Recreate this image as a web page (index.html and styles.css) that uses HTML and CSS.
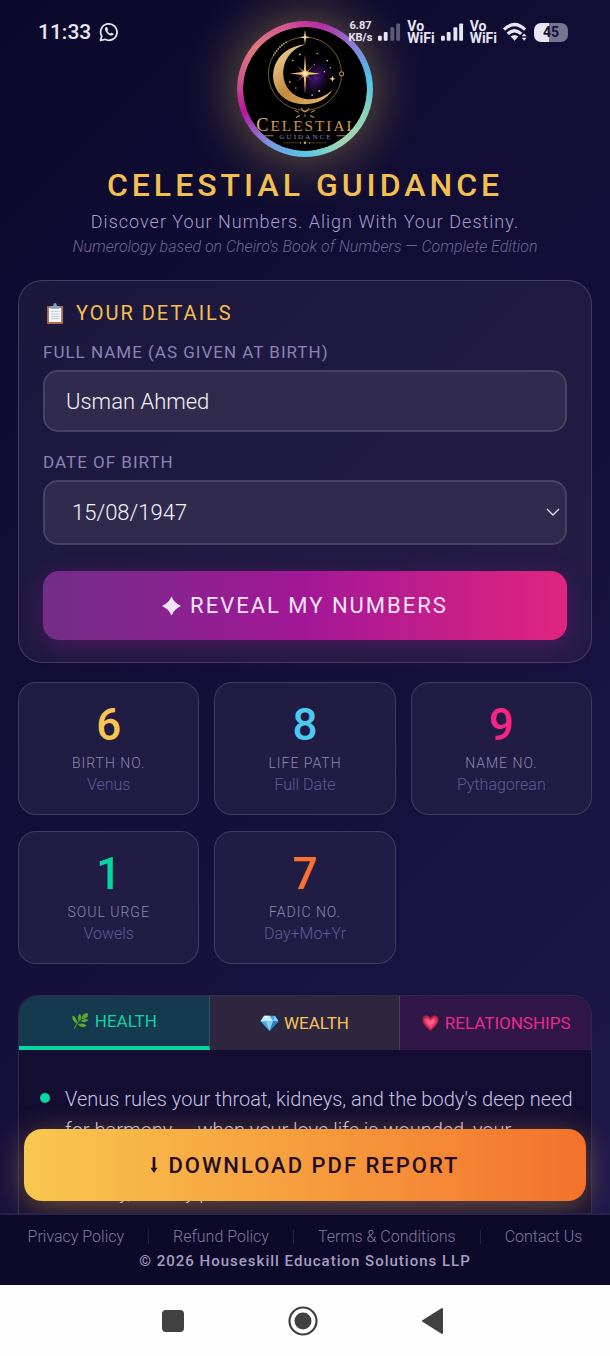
FILE: index.html
```html
<!DOCTYPE html>
<html lang="en">
<head>
<meta charset="utf-8">
<meta name="viewport" content="width=device-width, initial-scale=1">
<title>Celestial Guidance</title>
<link rel="stylesheet" href="styles.css">
</head>
<body>
<div class="status-bar">
  <div class="status-group">
    <span class="clock">11:33</span>
    <svg class="whatsapp" viewBox="0 0 20 20" fill="none" stroke="currentColor" stroke-width="1.8"><path d="M1.500 18.500l1.200-4.400A8.200 8.200 0 1 1 6 17.300z" stroke-linejoin="round"/><path d="M6.800 5.300c-1.600 1.400-.7 4 1.500 6.100 2.200 2.100 4.700 3 6 1.400.4-.6.3-1-.1-1.300l-1.500-.8c-.5-.2-.8 0-1.300.8-1.300-.4-2.400-1.500-3-2.800.7-.6.9-.8.7-1.300l-.7-1.600c-.3-.7-.9-.9-1.600-.5z" fill="currentColor" stroke="none"/></svg>
  </div>
  <div class="status-group status-right">
    <span class="speed">6.87<br>KB/s</span>
    <svg class="signal" viewBox="0 0 24 20" fill="currentColor"><rect x="0" y="14" width="4" height="5" rx="1"/><rect x="6" y="10" width="4" height="9" rx="1"/><rect x="13" y="5" width="4" height="14" rx="1" opacity=".35"/><rect x="19" y="1" width="4" height="18" rx="1" opacity=".35"/></svg>
    <span class="vowifi">Vo<br>WiFi</span>
    <svg class="signal" viewBox="0 0 24 20" fill="currentColor"><rect x="0" y="14" width="4" height="5" rx="1"/><rect x="6" y="10" width="4" height="9" rx="1"/><rect x="13" y="5" width="4" height="14" rx="1"/><rect x="19" y="1" width="4" height="18" rx="1"/></svg>
    <span class="vowifi">Vo<br>WiFi</span>
    <svg class="wifi" viewBox="0 0 26 20" fill="none" stroke="currentColor" stroke-width="3.400"><path d="M1 7.500Q12 -3 23 7.500M5 12q7-6.500 14 0"/><path d="M8 14.800q4-3.500 8 0L12 19z" fill="currentColor" stroke="none"/><path d="M19.500 14.500l2.500-3 2.500 3zM19.500 16l2.500 3 2.500-3z" fill="currentColor" stroke="none"/></svg>
    <span class="battery">45</span>
  </div>
</div>

<main class="app">
  <header class="hero">
    <div class="logo-ring">
      <svg class="logo" viewBox="0 0 122 122" role="img" aria-label="Celestial Guidance logo">
        <defs>
          <linearGradient id="gold" x1="0" y1="0" x2="1" y2="1"><stop offset="0" stop-color="#f6dca0"/><stop offset=".5" stop-color="#c18a3f"/><stop offset="1" stop-color="#e8bb70"/></linearGradient>
          <radialGradient id="nebula"><stop offset="0" stop-color="#4c1b85"/><stop offset="1" stop-color="#080310" stop-opacity="0"/></radialGradient>
          <radialGradient id="flare"><stop offset="0" stop-color="#fff"/><stop offset=".4" stop-color="#ffd98a"/><stop offset="1" stop-color="#c87a30" stop-opacity="0"/></radialGradient>
        </defs>
        <circle cx="61" cy="61" r="61" fill="#000"/>
        <circle cx="61" cy="46" r="36" fill="none" stroke="#a98245" stroke-width=".7"/>
        <path d="M30 28A36 36 0 0 1 44 14" fill="none" stroke="#efc982" stroke-width="1.600" stroke-dasharray="1 1.500"/>
        <ellipse cx="72" cy="50" rx="18" ry="25" fill="url(#nebula)" transform="rotate(30 72 50)"/>
        <path d="M62 17C18 21 20 77 62 76Q80 75 88 62Q77 72 63 71C32 67 32 25 62 17z" fill="url(#gold)"/>
        <path d="M61 27l1.200 17L76 46l-13.800 1.200L61 66l-1.200-18.800L46 46l13.800-2z" fill="#f4c77c"/>
        <path d="M53 38l8.500 7 8-7-7.500 8 7.500 8-8-7.500-8.500 7.500 7.500-8z" fill="#c98e4c"/>
        <circle cx="61" cy="46" r="5" fill="url(#flare)"/>
        <path d="M61 3l1 6 4 1-4 1-1 6-1-6-4-1 4-1zM88 48l.8 2.200L91 51l-2.200.8L88 54l-.8-2.200L85 51l2.200-.8z" fill="#f0ce88"/>
        <circle cx="97" cy="46" r="2" fill="#000" stroke="#b88d49"/>
        <g fill="#e4c386"><circle cx="49" cy="33" r=".8"/><circle cx="56" cy="27" r=".9"/><circle cx="73" cy="26" r=".7"/><circle cx="83" cy="33" r=".9"/><circle cx="86" cy="40" r=".7"/><circle cx="46" cy="54" r=".8"/><circle cx="52" cy="60" r=".7"/><circle cx="75" cy="63" r="1"/><circle cx="70" cy="37" r=".6"/><circle cx="80" cy="44" r=".7"/><circle cx="68" cy="67" r=".8"/></g>
        <path d="M57 80q4 7 8 0M55 84l-4-2M56 87l-4 2M67 84l4-2M66 87l4 2M61 86v2" fill="none" stroke="#c79a55"/>
        <text x="63" y="102" text-anchor="middle" class="logo-name" fill="url(#gold)"><tspan class="logo-cap">C</tspan>ELESTIAL</text>
        <text x="62" y="110" text-anchor="middle" class="logo-sub">GUIDANCE</text>
        <path d="M19 107h11M92 107h12" stroke="#c79a55" stroke-width=".8"/><path d="M40 114h15M67 114h15" stroke="#8b693c" stroke-width=".5"/><circle cx="61" cy="114" r="1.300" fill="#c79a55"/><circle cx="56.500" cy="114" r=".8" fill="#c79a55"/><circle cx="65.500" cy="114" r=".8" fill="#c79a55"/>
      </svg>
    </div>
    <h1 class="title">CELESTIAL GUIDANCE</h1>
    <p class="tagline">Discover Your Numbers. Align With Your Destiny.</p>
    <p class="source">Numerology based on Cheiro's Book of Numbers — Complete Edition</p>
  </header>

  <form class="details">
    <h2 class="details-title">
      <svg class="clipboard" viewBox="0 0 20 22"><rect x="1" y="3" width="17" height="19" rx="1" fill="#a7674a"/><path d="M3 5h13v15H3z" fill="#f5f7fa"/><path d="M5 9h9M5 11.500h9M5 14h9M5 16.500h9" stroke="#b4bec8" stroke-width=".8"/><path d="M5 6V3h2.500q.2-3 2-3t2 3H14v3z" fill="#7ca5bb"/></svg>
      YOUR DETAILS
    </h2>
    <label class="field-label" for="name">FULL NAME (AS GIVEN AT BIRTH)</label>
    <input class="field" id="name" type="text" value="Usman Ahmed">
    <label class="field-label" for="dob">DATE OF BIRTH</label>
    <div class="date-wrap">
      <select class="field date" id="dob"><option>15/08/1947</option></select>
      <svg class="chevron" viewBox="0 0 14 8" fill="none" stroke="currentColor" stroke-width="1.300"><path d="M1 1l6 6 6-6"/></svg>
    </div>
    <button class="reveal" type="button">
      <svg class="spark" viewBox="0 0 20 20"><path d="M10 0Q13 7 20 10 13 13 10 20 7 13 0 10 7 7 10 0z" fill="currentColor"/></svg>
      REVEAL MY NUMBERS
    </button>
  </form>

  <section class="stats">
    <article class="stat"><strong class="num gold">6</strong><span class="stat-label">BIRTH NO.</span><span class="stat-note">Venus</span></article>
    <article class="stat"><strong class="num blue">8</strong><span class="stat-label">LIFE PATH</span><span class="stat-note">Full Date</span></article>
    <article class="stat"><strong class="num pink">9</strong><span class="stat-label">NAME NO.</span><span class="stat-note">Pythagorean</span></article>
    <article class="stat"><strong class="num green">1</strong><span class="stat-label">SOUL URGE</span><span class="stat-note">Vowels</span></article>
    <article class="stat"><strong class="num orange">7</strong><span class="stat-label">FADIC NO.</span><span class="stat-note">Day+Mo+Yr</span></article>
  </section>

  <section class="report">
    <div class="tabs">
      <button class="tab tab-health" type="button"><svg class="tab-icon" viewBox="0 0 20 20"><path d="M3 19Q7 9 15 4" fill="none" stroke="#3f8a22" stroke-width="1.500"/><g fill="#5fa82e"><path d="M12 8Q10 2 18 1q2 6-6 7z"/><path d="M8 10Q6 6 9 2q4 4-1 8zM6 13Q0 10 1 4q6 3 5 9z"/><path d="M10 10q5-4 9-1-4 4-9 1zM7 14q5-3 10 1-5 4-10-1z"/></g></svg>HEALTH</button>
      <button class="tab tab-wealth" type="button"><svg class="tab-icon" viewBox="0 0 20 20"><path d="M4 2h12l4 6-10 11L0 8z" fill="#47a8de"/><path d="M4 2l2 6H0zM10 2l4 6H6z" fill="#c3ecff"/><path d="M16 2l4 6h-6zM6 8h8l-4 11z" fill="#86cff5"/><path d="M4 2h6L6 8z" fill="#e9faff"/><path d="M14 8h6L10 19z" fill="#297ebd"/></svg>WEALTH</button>
      <button class="tab tab-love" type="button"><svg class="tab-icon" viewBox="0 0 20 20"><path d="M10 19C5 14 1 11 1 6.500 1 1 7 0 10 4.500 13 0 19 1 19 6.500 19 11 15 14 10 19z" fill="#b7204c"/><path d="M10 17C6 13 3 10 3 7c0-4 5-4 7 0 2-4 7-4 7 0 0 3-3 6-7 10z" fill="#e83e68"/><path d="M10 14C7 11 5 9 5.500 7c1-2 4-1 4.500 2 .5-3 3.500-4 4.500-2C15 9 13 11 10 14z" fill="#f76486"/></svg>RELATIONSHIPS</button>
    </div>
    <ul class="insights">
      <li class="insight">Venus rules your throat, kidneys, and the body's deep need for harmony — when your love life is wounded, your emotional balance suffers too. Make home a warm, healthy, steady place.</li>
    </ul>
  </section>

  <button class="download" type="button">
    <svg class="down" viewBox="0 0 8 18"><path d="M2.500 0h3v12H8l-4 6-4-6h2.500z" fill="currentColor"/></svg>
    DOWNLOAD PDF REPORT
  </button>
</main>

<footer class="footer">
  <nav class="links">
    <a href="#">Privacy Policy</a><span class="sep"></span><a href="#">Refund Policy</a><span class="sep"></span><a href="#">Terms &amp; Conditions</a><span class="sep"></span><a href="#">Contact Us</a>
  </nav>
  <p class="copyright">© 2026 Houseskill Education Solutions LLP</p>
</footer>

<div class="system-nav">
  <button class="sys" type="button" aria-label="Recent apps"><svg viewBox="0 0 30 30"><rect x="4" y="4" width="22" height="22" rx="4" fill="currentColor"/></svg></button>
  <button class="sys" type="button" aria-label="Home"><svg viewBox="0 0 30 30"><circle cx="15" cy="15" r="13.500" fill="none" stroke="currentColor" stroke-width="2.200"/><circle cx="15" cy="15" r="8.500" fill="currentColor"/></svg></button>
  <button class="sys" type="button" aria-label="Back"><svg viewBox="0 0 30 30"><path d="M24 3v24L5 15z" fill="currentColor" stroke="currentColor" stroke-width="2" stroke-linejoin="round"/></svg></button>
</div>
</body>
</html>
```
FILE: styles.css
```css
* { box-sizing: border-box; }
body {
  margin: 0;
  height: 100vh;
  display: flex;
  flex-direction: column;
  font-family: Roboto, "Liberation Sans", sans-serif;
  font-weight: 300;
  color: #fff;
  background: #0d0a2b;
  position: relative;
}
h1, h2, p, ul { margin: 0; padding: 0; }
button, input, select { font-family: inherit; }
svg { display: block; flex: none; }

.status-bar {
  position: absolute;
  z-index: 3;
  top: 20px;
  left: 38px;
  right: 42px;
  display: flex;
  justify-content: space-between;
  color: #e7e5f2;
}
.status-group { display: flex; align-items: center; gap: 8px; height: 24px; }
.status-right { gap: 6px; }
.clock { font-size: 21px; font-weight: 500; }
.whatsapp { width: 20px; height: 20px; }
.speed { font-size: 11px; line-height: 12px; font-weight: 700; text-align: center; }
.vowifi { font-size: 14px; line-height: 12px; font-weight: 700; }
.signal { width: 23px; height: 20px; }
.wifi { width: 25px; height: 20px; }
.battery {
  width: 34px;
  border-radius: 7px;
  background: linear-gradient(90deg, #e7e5f2 45%, #77748f 45%);
  color: #17123c;
  font-size: 14px;
  line-height: 19px;
  font-weight: 700;
  text-align: center;
}

.app {
  flex: 1;
  min-height: 0;
  overflow: hidden;
  position: relative;
  padding: 21px 18px 0;
  background: linear-gradient(135deg, #0b092b 0%, #120e36 40%, #17123f 70%, #1f194b 100%);
}

.hero { text-align: center; }
.logo-ring {
  width: 136px;
  height: 136px;
  margin: 0 auto 8px;
  padding: 6px;
  border-radius: 50%;
  background: conic-gradient(#c43a9e 0deg, #b52da6 15deg, #8f78d0 45deg, #4cc3ec 80deg, #93d3b4 115deg, #a2d6b0 145deg, #58c8e8 180deg, #7b93dc 215deg, #b5179e 250deg, #cc5a8c 280deg, #de7a7c 310deg, #d05392 345deg, #c43a9e 360deg);
  box-shadow: 0 0 55px rgba(249, 199, 79, 0.45);
}
.logo { width: 100%; height: 100%; border-radius: 50%; }
.logo-name { font: 15px "Liberation Serif", serif; letter-spacing: 2px; }
.logo-cap { font-size: 18px; }
.logo-sub { font: 7px "Liberation Serif", serif; letter-spacing: 2px; fill: #9080b8; }
.title {
  margin-bottom: 2px;
  font-size: 32px;
  line-height: 40px;
  font-weight: 500;
  letter-spacing: 4px;
  color: #f2bf50;
}
.tagline { font-size: 18px; line-height: 30px; letter-spacing: 1px; color: #a79dcb; }
.source { font-size: 16px; line-height: 20px; font-style: italic; color: #6e6491; }

.details {
  margin-top: 23px;
  padding: 20px 24px 22px;
  border: 1px solid rgba(255, 255, 255, 0.16);
  border-radius: 24px;
  background: linear-gradient(135deg, #1b183c, #241c46);
  display: flex;
  flex-direction: column;
}
.details-title {
  display: flex;
  align-items: center;
  gap: 11px;
  padding-left: 3px;
  font-size: 20px;
  line-height: 24px;
  font-weight: 400;
  letter-spacing: 2px;
  color: #f5c04f;
}
.clipboard { width: 19px; height: 21px; }
.field-label {
  margin-top: 15px;
  font-size: 17px;
  line-height: 24px;
  font-weight: 400;
  letter-spacing: 1px;
  color: #8d82b6;
}
.field {
  width: 100%;
  height: 62px;
  margin: 6px 0 3px;
  padding: 0 21px;
  border: 2px solid #474262;
  border-radius: 15px;
  background: #302b4d;
  color: #f4f2fb;
  font-size: 22px;
  font-weight: 300;
}
.date-wrap { position: relative; display: flex; }
.date { height: 65px; margin: 6px 0 0; padding: 0 27px; appearance: none; }
.chevron {
  position: absolute;
  right: 7px;
  top: 34px;
  width: 14px;
  height: 8px;
  color: #e4e2ee;
}
.reveal {
  margin-top: 26px;
  height: 69px;
  border: 0;
  border-radius: 16px;
  display: flex;
  align-items: center;
  justify-content: center;
  gap: 9px;
  font-size: 22px;
  font-weight: 400;
  letter-spacing: 2px;
  color: #f1e3f4;
  background: linear-gradient(90deg, #722e88, #a31797 50%, #e0257e);
  box-shadow: 0 6px 24px rgba(181, 23, 158, 0.3);
}
.spark { width: 19px; height: 20px; }

.stats {
  margin-top: 19px;
  display: grid;
  grid-template-columns: repeat(3, 1fr);
  gap: 16px 15px;
}
.stat {
  padding: 17px 6px 18px;
  border: 1px solid rgba(255, 255, 255, 0.14);
  border-radius: 18px;
  background: #201c43;
  display: flex;
  flex-direction: column;
  align-items: center;
}
.num { margin-bottom: 2px; font-size: 44px; line-height: 50px; font-weight: 500; }
.gold { color: #f9c74f; }
.blue { color: #4cc9f0; }
.pink { color: #f72585; }
.green { color: #06d6a0; }
.orange { color: #f9722f; }
.stat-label { font-size: 14px; line-height: 22px; letter-spacing: 1px; color: #9087b2; }
.stat-note { font-size: 16px; line-height: 22px; color: #625898; }

.report {
  margin-top: 31px;
  border: 1px solid rgba(255, 255, 255, 0.12);
  border-radius: 20px 20px 0 0;
  overflow: hidden;
  background: #120d31;
}
.tabs { display: grid; grid-template-columns: repeat(3, 1fr); }
.tab {
  height: 54px;
  padding: 0 4px;
  border: 0;
  border-right: 1px solid rgba(255, 255, 255, 0.12);
  display: flex;
  align-items: center;
  justify-content: center;
  gap: 5px;
  font-size: 17px;
  font-weight: 400;
}
.tab-icon { width: 19px; height: 18px; }
.tab-health { border-bottom: 4px solid #06d6a0; background: #15394f; color: #14cf9f; }
.tab-wealth { background: #2e253f; color: #f5c55a; }
.tab-love { border-right: 0; background: #301748; color: #e72a8b; }
.insights { padding: 34px 14px 40px 20px; list-style: none; }
.insight {
  position: relative;
  padding-left: 26px;
  font-size: 20px;
  line-height: 31px;
  color: #c9c0e2;
}
.insight::before {
  content: "";
  position: absolute;
  left: 1px;
  top: 9px;
  width: 10px;
  height: 10px;
  border-radius: 50%;
  background: #06d6a0;
}

.download {
  position: absolute;
  left: 24px;
  right: 24px;
  bottom: 12px;
  height: 72px;
  border: 0;
  border-radius: 18px;
  display: flex;
  align-items: center;
  justify-content: center;
  gap: 10px;
  font-size: 22px;
  font-weight: 500;
  letter-spacing: 2px;
  color: #240e2c;
  background: linear-gradient(90deg, #f9c74f, #f3722c);
  box-shadow: 0 6px 30px rgba(249, 180, 79, 0.4);
}
.down { width: 8px; height: 16px; }

.footer {
  padding: 10px 12px 12px;
  border-top: 2px solid #28224a;
  background: #0d0928;
  text-align: center;
}
.links { display: flex; align-items: center; justify-content: center; gap: 24px; line-height: 24px; }
.links a { font-size: 16px; color: #81789f; text-decoration: none; }
.sep { width: 1px; height: 14px; background: #28213f; }
.copyright { font-size: 15px; line-height: 24px; font-weight: 500; letter-spacing: 1px; color: #a79dc4; }

.system-nav {
  height: 71px;
  padding-right: 4px;
  background: #fefefe;
  display: flex;
  align-items: center;
  justify-content: center;
  gap: 100px;
}
.sys { width: 30px; height: 30px; padding: 0; border: 0; background: none; color: #414141; }
```
